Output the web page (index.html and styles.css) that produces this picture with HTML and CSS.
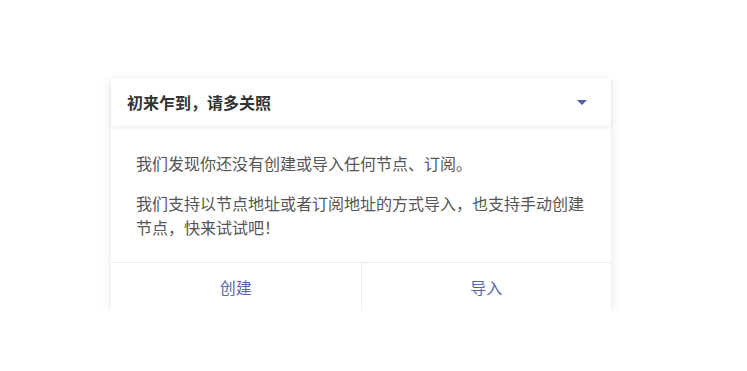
FILE: index.html
```html
<!DOCTYPE html>
<html lang="zh-CN">
<head>
<meta charset="utf-8">
<link rel="stylesheet" href="styles.css">
</head>
<body>
<div class="card">
  <div class="card-header">
    <span class="title">初来乍到，请多关照</span>
    <svg class="arrow" width="10" height="5" viewBox="0 0 10 5"><path d="M0 0H10L5 5Z" fill="#4b5fa6"/></svg>
  </div>
  <div class="card-body">
    <p>我们发现你还没有创建或导入任何节点、订阅。</p>
    <p>我们支持以节点地址或者订阅地址的方式导入，也支持手动创建节点，快来试试吧！</p>
  </div>
  <div class="card-actions">
    <button class="action">创建</button>
    <button class="action">导入</button>
  </div>
</div>
</body>
</html>
```
FILE: styles.css
```css
html, body {
  margin: 0;
  padding: 0;
  background: #fff;
}
body {
  font-family: "Noto Sans CJK SC", "Noto Sans", sans-serif;
  padding-top: 78px;
  padding-left: 111px;
}
.card {
  width: 500px;
  background: #fff;
  box-shadow: 0 2px 10px rgba(0, 0, 0, 0.1);
}
.card-header {
  height: 48px;
  display: flex;
  align-items: center;
  justify-content: space-between;
  padding: 0 24px 0 16px;
  box-shadow: 0 2px 4px rgba(0, 0, 0, 0.06);
  position: relative;
}
.title {
  font-size: 16px;
  font-weight: bold;
  color: #333;
}
.card-body {
  padding: 25px 24px 23px 25px;
  font-size: 16px;
  line-height: 24px;
  color: #555;
}
.card-body p {
  margin: 0;
}
.card-body p + p {
  margin-top: 16px;
}
.card-actions {
  display: flex;
  border-top: 1px solid #eee;
}
.action {
  flex: 1;
  height: 48px;
  border: none;
  background: #fff;
  font-family: inherit;
  font-size: 16px;
  color: #5469a8;
  padding: 0;
}
.action + .action {
  border-left: 1px solid #eee;
}
```
